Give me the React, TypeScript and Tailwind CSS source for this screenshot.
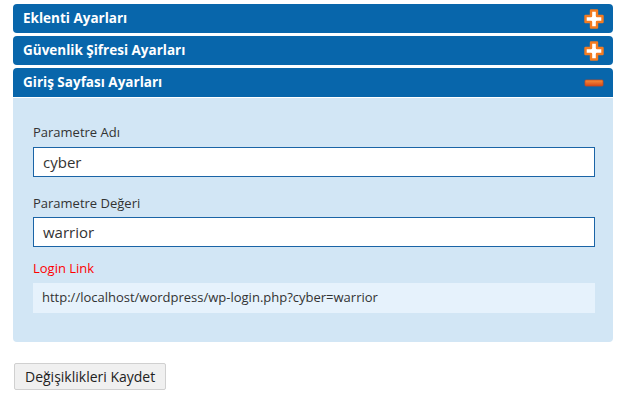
import React from "react";

function PlusIcon() {
  return (
    <svg width="20" height="20" viewBox="0 0 20 20">
      <path
        d="M7 1.5h6v5.5h5.5v6H13v5.5H7V13H1.5V7H7z"
        fill="#fff"
        stroke="#f47b20"
        strokeWidth="2.4"
        strokeLinejoin="round"
      />
    </svg>
  );
}

function MinusIcon() {
  return (
    <svg width="20" height="8" viewBox="0 0 20 8">
      <defs>
        <linearGradient id="mg" x1="0" y1="0" x2="0" y2="1">
          <stop offset="0" stopColor="#f7903a" />
          <stop offset="1" stopColor="#d4461a" />
        </linearGradient>
      </defs>
      <rect x="1" y="1" width="18" height="6" rx="1" fill="url(#mg)" stroke="#c94a1c" strokeWidth="0.8" />
    </svg>
  );
}

function Header({ title, open }: { title: string; open?: boolean }) {
  return (
    <div
      className={`flex h-[29px] items-center justify-between bg-[#0866ab] pl-[10px] pr-[9px] text-[13.5px] font-bold text-white ${
        open ? "rounded-t-[4px]" : "rounded-[4px]"
      }`}
    >
      <span>{title}</span>
      {open ? <MinusIcon /> : <PlusIcon />}
    </div>
  );
}

export default function App() {
  return (
    <div
      className="min-h-[405px] bg-white px-[13px] pt-[4px] text-[#333]"
      style={{ fontFamily: '"Open Sans", sans-serif' }}
    >
      <div className="w-[600px]">
        <div className="flex flex-col gap-[3px]">
          <Header title="Eklenti Ayarları" />
          <Header title="Güvenlik Şifresi Ayarları" />
          <div>
            <Header title="Giriş Sayfası Ayarları" open />
            <div className="mt-[1px] rounded-b-[4px] bg-[#d2e6f5] pl-[20px] pr-[18px] pt-[25px] pb-[29px]">
              <div className="text-[13px] leading-[18px] text-[#333]">Parametre Adı</div>
              <div className="mt-[6px] flex h-[30px] items-center border border-[#1a64a6] bg-white px-[9px] text-[15px] text-[#333]">
                cyber
              </div>
              <div className="mt-[17px] text-[13px] leading-[18px] text-[#333]">Parametre Değeri</div>
              <div className="mt-[5px] flex h-[30px] items-center border border-[#1a64a6] bg-white px-[9px] text-[15px] text-[#333]">
                warrior
              </div>
              <div className="mt-[12px] text-[13px] leading-[18px] text-[#ff0000]">Login Link</div>
              <div className="mt-[6px] flex h-[30px] items-center bg-[#e6f2fc] px-[9px] text-[13px] text-[#333]">
                http://localhost/wordpress/wp-login.php?cyber=warrior
              </div>
            </div>
          </div>
        </div>
        <button className="mt-[21px] ml-[1px] h-[27px] rounded-[2px] border border-[#d0d0d0] bg-[#f0f0f0] px-[10px] text-[14px] text-[#222]">
          Değişiklikleri Kaydet
        </button>
      </div>
    </div>
  );
}
